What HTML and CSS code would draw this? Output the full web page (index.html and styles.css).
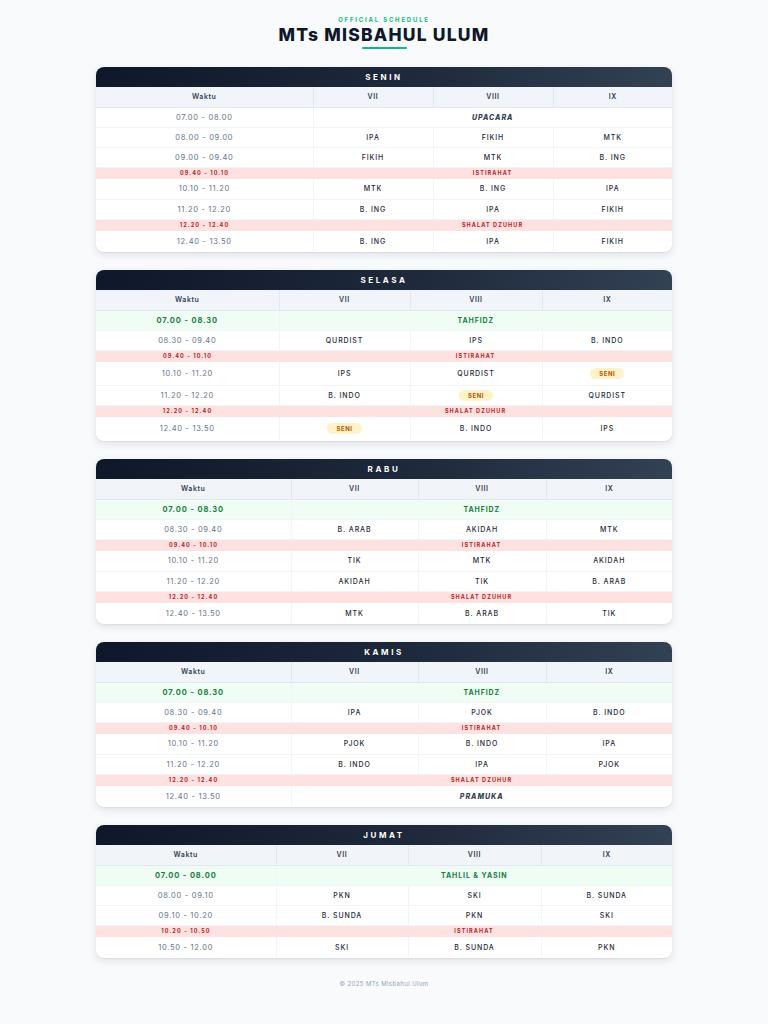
FILE: index.html
```html
<!DOCTYPE html>
<html lang="id">
<head>
<meta charset="utf-8">
<title>Jadwal MTs Misbahul Ulum</title>
<link rel="stylesheet" href="styles.css">
</head>
<body>
<div class="page">
  <header class="top">
    <div class="eyebrow">OFFICIAL SCHEDULE</div>
    <h1 class="title">MTs MISBAHUL ULUM</h1>
    <div class="rule"></div>
  </header>

  <section class="card">
    <div class="day">SENIN</div>
    <table class="grid senin">
      <colgroup><col class="c0"><col class="c1"><col class="c2"><col class="c3"></colgroup>
      <thead><tr><th>Waktu</th><th>VII</th><th>VIII</th><th>IX</th></tr></thead>
      <tbody>
        <tr><td class="time">07.00 - 08.00</td><td colspan="3" class="event">UPACARA</td></tr>
        <tr><td class="time">08.00 - 09.00</td><td>IPA</td><td>FIKIH</td><td>MTK</td></tr>
        <tr><td class="time">09.00 - 09.40</td><td>FIKIH</td><td>MTK</td><td>B. ING</td></tr>
        <tr class="break"><td>09.40 - 10.10</td><td colspan="3">ISTIRAHAT</td></tr>
        <tr><td class="time">10.10 - 11.20</td><td>MTK</td><td>B. ING</td><td>IPA</td></tr>
        <tr><td class="time">11.20 - 12.20</td><td>B. ING</td><td>IPA</td><td>FIKIH</td></tr>
        <tr class="break"><td>12.20 - 12.40</td><td colspan="3">SHALAT DZUHUR</td></tr>
        <tr><td class="time">12.40 - 13.50</td><td>B. ING</td><td>IPA</td><td>FIKIH</td></tr>
      </tbody>
    </table>
  </section>

  <section class="card">
    <div class="day">SELASA</div>
    <table class="grid selasa">
      <colgroup><col class="c0"><col class="c1"><col class="c2"><col class="c3"></colgroup>
      <thead><tr><th>Waktu</th><th>VII</th><th>VIII</th><th>IX</th></tr></thead>
      <tbody>
        <tr class="green"><td>07.00 - 08.30</td><td colspan="3">TAHFIDZ</td></tr>
        <tr><td class="time">08.30 - 09.40</td><td>QURDIST</td><td>IPS</td><td>B. INDO</td></tr>
        <tr class="break"><td>09.40 - 10.10</td><td colspan="3">ISTIRAHAT</td></tr>
        <tr class="tall"><td class="time">10.10 - 11.20</td><td>IPS</td><td>QURDIST</td><td><span class="badge">SENI</span></td></tr>
        <tr><td class="time">11.20 - 12.20</td><td>B. INDO</td><td><span class="badge">SENI</span></td><td>QURDIST</td></tr>
        <tr class="break"><td>12.20 - 12.40</td><td colspan="3">SHALAT DZUHUR</td></tr>
        <tr class="tall"><td class="time">12.40 - 13.50</td><td><span class="badge">SENI</span></td><td>B. INDO</td><td>IPS</td></tr>
      </tbody>
    </table>
  </section>

  <section class="card">
    <div class="day">RABU</div>
    <table class="grid rabu">
      <colgroup><col class="c0"><col class="c1"><col class="c2"><col class="c3"></colgroup>
      <thead><tr><th>Waktu</th><th>VII</th><th>VIII</th><th>IX</th></tr></thead>
      <tbody>
        <tr class="green"><td>07.00 - 08.30</td><td colspan="3">TAHFIDZ</td></tr>
        <tr><td class="time">08.30 - 09.40</td><td>B. ARAB</td><td>AKIDAH</td><td>MTK</td></tr>
        <tr class="break"><td>09.40 - 10.10</td><td colspan="3">ISTIRAHAT</td></tr>
        <tr><td class="time">10.10 - 11.20</td><td>TIK</td><td>MTK</td><td>AKIDAH</td></tr>
        <tr><td class="time">11.20 - 12.20</td><td>AKIDAH</td><td>TIK</td><td>B. ARAB</td></tr>
        <tr class="break"><td>12.20 - 12.40</td><td colspan="3">SHALAT DZUHUR</td></tr>
        <tr><td class="time">12.40 - 13.50</td><td>MTK</td><td>B. ARAB</td><td>TIK</td></tr>
      </tbody>
    </table>
  </section>

  <section class="card">
    <div class="day">KAMIS</div>
    <table class="grid kamis">
      <colgroup><col class="c0"><col class="c1"><col class="c2"><col class="c3"></colgroup>
      <thead><tr><th>Waktu</th><th>VII</th><th>VIII</th><th>IX</th></tr></thead>
      <tbody>
        <tr class="green"><td>07.00 - 08.30</td><td colspan="3">TAHFIDZ</td></tr>
        <tr><td class="time">08.30 - 09.40</td><td>IPA</td><td>PJOK</td><td>B. INDO</td></tr>
        <tr class="break"><td>09.40 - 10.10</td><td colspan="3">ISTIRAHAT</td></tr>
        <tr><td class="time">10.10 - 11.20</td><td>PJOK</td><td>B. INDO</td><td>IPA</td></tr>
        <tr><td class="time">11.20 - 12.20</td><td>B. INDO</td><td>IPA</td><td>PJOK</td></tr>
        <tr class="break"><td>12.20 - 12.40</td><td colspan="3">SHALAT DZUHUR</td></tr>
        <tr><td class="time">12.40 - 13.50</td><td colspan="3" class="event">PRAMUKA</td></tr>
      </tbody>
    </table>
  </section>

  <section class="card">
    <div class="day">JUMAT</div>
    <table class="grid jumat">
      <colgroup><col class="c0"><col class="c1"><col class="c2"><col class="c3"></colgroup>
      <thead><tr><th>Waktu</th><th>VII</th><th>VIII</th><th>IX</th></tr></thead>
      <tbody>
        <tr class="green"><td>07.00 - 08.00</td><td colspan="3">TAHLIL &amp; YASIN</td></tr>
        <tr><td class="time">08.00 - 09.10</td><td>PKN</td><td>SKI</td><td>B. SUNDA</td></tr>
        <tr><td class="time">09.10 - 10.20</td><td>B. SUNDA</td><td>PKN</td><td>SKI</td></tr>
        <tr class="break"><td>10.20 - 10.50</td><td colspan="3">ISTIRAHAT</td></tr>
        <tr><td class="time">10.50 - 12.00</td><td>SKI</td><td>B. SUNDA</td><td>PKN</td></tr>
      </tbody>
    </table>
  </section>

  <footer class="foot">© 2025 MTs Misbahul Ulum</footer>
</div>
</body>
</html>
```

FILE: styles.css
```css
* { box-sizing: border-box; }

html, body {
  margin: 0;
  padding: 0;
  background: #f8fafc;
}

body {
  font-family: "Inter", "Liberation Sans", sans-serif;
  color: #1e293b;
}

.page {
  width: 576px;
  margin: 0 auto;
  padding-top: 16px;
}

.top {
  display: flex;
  flex-direction: column;
  align-items: center;
  margin-bottom: 18px;
}

.eyebrow {
  font-size: 6px;
  line-height: 8px;
  font-weight: 700;
  letter-spacing: 1.8px;
  color: #10b981;
}

.title {
  margin: 2px 0 0;
  font-size: 17.5px;
  line-height: 18px;
  font-weight: 800;
  letter-spacing: 1.2px;
  color: #0f172a;
}

.rule {
  margin-top: 3px;
  width: 45px;
  height: 2px;
  border-radius: 1px;
  background: #10b981;
}

.card {
  background: #ffffff;
  border-radius: 8px;
  overflow: hidden;
  box-shadow: 0 3px 8px rgba(15, 23, 42, 0.10), 0 1px 2px rgba(15, 23, 42, 0.06);
  margin-bottom: 18px;
  padding-bottom: 1px;
}

.day {
  height: 20px;
  display: flex;
  align-items: center;
  justify-content: center;
  background: linear-gradient(100deg, #0f172a 0%, #1e293b 55%, #334155 100%);
  color: #ffffff;
  font-size: 8px;
  font-weight: 700;
  letter-spacing: 2.6px;
}

.grid {
  width: 100%;
  border-collapse: collapse;
  table-layout: fixed;
  text-align: center;
}

.senin .c0 { width: 217px; }
.senin .c1 { width: 120px; }
.senin .c2 { width: 120px; }
.selasa .c0 { width: 183px; }
.selasa .c1 { width: 131px; }
.selasa .c2 { width: 132px; }
.rabu .c0, .kamis .c0 { width: 195px; }
.rabu .c1, .kamis .c1 { width: 127px; }
.rabu .c2, .kamis .c2 { width: 128px; }
.jumat .c0 { width: 180px; }
.jumat .c1 { width: 132px; }
.jumat .c2 { width: 133px; }

.grid th {
  height: 20px;
  padding: 0 4px;
  background: #f1f5f9;
  color: #334155;
  font-size: 7px;
  font-weight: 600;
  letter-spacing: 0.6px;
  border-left: 1px solid #e2e8f0;
  border-bottom: 1px solid #e2e8f0;
}

.grid th:first-child { border-left: 0; }

.grid td {
  height: 20px;
  padding: 0 4px;
  font-size: 7px;
  font-weight: 500;
  letter-spacing: 0.9px;
  color: #1e293b;
  border-left: 1px solid #f1f5f9;
  border-bottom: 1px solid #f1f5f9;
  vertical-align: middle;
}

.grid td:first-child { border-left: 0; }
.grid tr:last-child td { border-bottom: 0; }

.grid tr.tall td { height: 23px; }

.grid td.time {
  color: #64748b;
  font-weight: 400;
  letter-spacing: 0.7px;
  font-size: 7.5px;
}

.grid td.event {
  font-style: italic;
  font-weight: 800;
  color: #334155;
  letter-spacing: 1px;
}

.grid tr.break td {
  height: 12px;
  background: #fee2e2;
  color: #b91c1c;
  font-size: 5.5px;
  font-weight: 700;
  letter-spacing: 1.1px;
  border-left: 0;
  border-bottom: 0;
}

.grid tr.green td {
  background: #f0fdf4;
  color: #15803d;
  font-weight: 700;
  letter-spacing: 0.9px;
  font-size: 7.5px;
}

.grid tr.green td + td { font-size: 7px; }

.badge {
  display: inline-block;
  vertical-align: middle;
  padding: 2px 9px;
  line-height: 7px;
  border-radius: 8px;
  background: #fef3c7;
  color: #b45309;
  font-size: 6px;
  font-weight: 700;
  letter-spacing: 0.6px;
}

.foot {
  padding-top: 4px;
  text-align: center;
  font-size: 6px;
  color: #94a3b8;
  letter-spacing: 0.4px;
}
```
